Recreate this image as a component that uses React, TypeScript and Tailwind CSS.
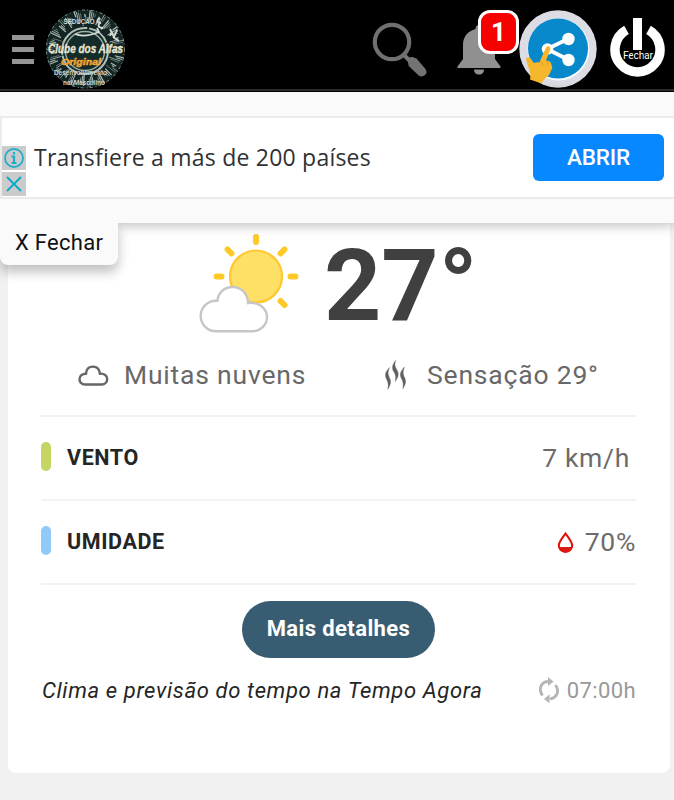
import type { ReactNode } from "react";

const ROBOTO = "font-['Roboto','Liberation_Sans',sans-serif]";

const RAYS = Array.from({ length: 90 }, (_, i) => ({
  angle: i * 4 + ((i * 7) % 4),
  from: 25 + ((i * 11) % 9),
  to: 34 + ((i * 5) % 6),
  width: 0.5 + ((i * 3) % 4) * 0.25,
}));

function ClubLogo() {
  return (
    <svg className="h-[80px] w-[80px] shrink-0 overflow-visible" viewBox="0 0 80 80">
      <circle cx="39.500" cy="40" r="39.500" fill="#122423" />
      {RAYS.map((r, i) => (
        <line
          key={i}
          x1="39.500"
          x2="39.500"
          y1={40 - r.from}
          y2={40 - r.to}
          stroke="#a9b8b2"
          strokeWidth={r.width}
          transform={`rotate(${r.angle} 39.500 40)`}
        />
      ))}
      <circle cx="39.500" cy="40" r="39" fill="none" stroke="#9fb0aa" strokeWidth="0.8" strokeDasharray="3 2 1 3" />
      <circle cx="39" cy="42" r="24" fill="#132b29" />
      <circle cx="39" cy="42" r="23" fill="none" stroke="#b3bfb6" strokeWidth="2" strokeDasharray="42 2 23 1" />
      <circle cx="39" cy="42" r="19.500" fill="none" stroke="#9eafa6" strokeWidth="1.400" />
      <path d="M29 25c7 3 14 2 24-2l-2-4M54 9c-4 2-3 5 1 5-4 1-3 5 2 5M64 20l4 8 3-7M67 28l6 4M66 22l-2 5" fill="none" stroke="#d7ddd4" strokeWidth="1.800" />
      <g fontFamily="Liberation Sans, sans-serif" fontWeight="bold" textAnchor="middle">
        <text x="33" y="15" fontSize="7" fill="#d5dbd7" textLength="31" lengthAdjust="spacingAndGlyphs">SEDUÇÃO</text>
        <text x="39.500" y="44" fontSize="12" fontStyle="italic" fill="#e7e5cf" stroke="#e7e5cf" strokeWidth="0.300" textLength="75" lengthAdjust="spacingAndGlyphs">Clube dos Alfas</text>
        <text x="35" y="55.500" fontSize="9.500" fontStyle="italic" fill="#f3a633" stroke="#f3a633" strokeWidth="0.500" textLength="40" lengthAdjust="spacingAndGlyphs">Original</text>
        <text x="34.500" y="66" fontSize="6.500" fill="#ccd4d0" textLength="53" lengthAdjust="spacingAndGlyphs">Desenvolvimento</text>
        <text x="38" y="75.500" fontSize="6.500" fill="#ccd4d0" textLength="42" lengthAdjust="spacingAndGlyphs">nal Masculino</text>
      </g>
    </svg>
  );
}

function SearchIcon() {
  return (
    <svg className="h-[60px] w-[58px]" viewBox="0 0 58 60">
      <path d="M32 35l9 9" stroke="#777" strokeWidth="4" />
      <circle cx="20" cy="22" r="17.200" fill="none" stroke="#707070" strokeWidth="4.200" />
      <path d="M35.500 39.500q1-3 5-2.500l4 1.500 9 10.500q2.500 4-.8 6.300-3 2.200-6 .2l-10-9.500z" fill="#737373" />
    </svg>
  );
}

function BellIcon() {
  return (
    <svg className="h-[52px] w-[44px]" viewBox="0 0 44 52">
      <path d="M22 1c2.200 0 3.500 1.800 3.500 4 7.500 2 12.500 7.500 12.500 16v14l5.500 7.500V44H.5v-1.500L6 35V21c0-8.500 5-14 12.500-16 0-2.200 1.300-4 3.500-4z" fill="#909090" />
      <path d="M17 45.500h10c0 3-2 5-5 5s-5-2-5-5z" fill="#909090" />
    </svg>
  );
}

function ShareIcon() {
  return (
    <svg className="h-[80px] w-[78px]" viewBox="0 0 78 80">
      <circle cx="39" cy="39" r="38.700" fill="#dcdce5" />
      <circle cx="39.500" cy="39.500" r="31" fill="#f6f8fb" />
      <circle cx="39" cy="38.500" r="30" fill="#0788ca" />
      <path d="M49 29L28 39l22 11" fill="none" stroke="#fff" strokeWidth="3.800" />
      <circle cx="49.500" cy="29" r="6.200" fill="#fff" />
      <circle cx="28.500" cy="39" r="5.800" fill="#fff" />
      <circle cx="49.500" cy="50" r="6.200" fill="#fff" />
      {/* Pointing hand */}
      <path d="M27 37.500c1-2.500 5.200-1.300 4.300 1.700L27 50.500c3.300.2 5.500 1.800 5.400 4.500 1.600 2 .8 4.300-.6 5.800C31 66.500 25 67.500 22.500 73.500L11 69.500c1-4.500 0-7.500-1-10.500L7.200 50.500c-.9-3.800 3.600-4.600 5-1.200l2.600 3.700c2-.9 4-.9 5.500-.5z" fill="#f6b72c" />
      <path d="M21 51.500c2.400.4 3.300 2.300 2.200 4.300M27 50.800c1.800 1.200 2 3.200.7 5" fill="none" stroke="#dc9722" strokeWidth="0.900" />
    </svg>
  );
}

function PowerIcon() {
  return (
    <svg className="h-[60px] w-[56px]" viewBox="0 0 56 60">
      <path d="M16.500 11.800A22.500 22.500 0 1 0 38.500 11.800" fill="none" stroke="#fff" strokeWidth="9.500" />
      <rect x="23" y="0" width="9" height="32" fill="#fff" />
      <text x="28" y="40.500" fontFamily="Roboto, sans-serif" fontSize="10.500" fill="#fff" stroke="#000" strokeWidth="2" paintOrder="stroke" textAnchor="middle" textLength="30">Fechar</text>
    </svg>
  );
}

function SunIcon() {
  return (
    <svg className="h-[102px] w-[102px]" viewBox="0 0 102 102">
      <g stroke="#ffc928" strokeWidth="6" strokeLinecap="round">
        <path d="M57 5v5M28.500 17.500l4 4M85.500 17.500l-4 4M17.500 44.500h5M91.500 44.500h5M81.500 69l4 4" />
      </g>
      <circle cx="57" cy="44.500" r="26" fill="#ffe066" stroke="#ffc72d" strokeWidth="2.200" />
      <path d="M17 99.300a15.300 15.300 0 0 1 0-30.600h1.500c.5-8 7-13.700 15-13.700 8.500 0 15.500 6.500 15.500 16 10-1.500 19 5 19 14 0 8-6.500 14.300-15 14.300z" fill="#fff" stroke="#c6c6c6" strokeWidth="2.400" />
    </svg>
  );
}

function CloudIcon() {
  return (
    <svg className="h-[23px] w-[32px]" viewBox="0 0 32 23" fill="none" stroke="#666" strokeWidth="2.400">
      <path d="M8 20.500c-3.500 0-5.500-2.600-5.500-5.300 0-3.200 2.600-5.400 6.500-5.500C9.300 5.300 12 2.600 16 2.600s6.500 3 6.900 7.100c4.500-.4 7.300 2 7.300 5.400 0 3.200-2.400 5.400-5.500 5.400z" />
    </svg>
  );
}

function HeatIcon() {
  return (
    <svg className="h-[30px] w-[24px]" viewBox="0 0 24 30" fill="#606060" stroke="#606060" strokeWidth="0.400">
      <path d="M4.500 7.500C-.5 13-.5 15.500 2.200 20.500c1.200 2.500 1.300 5 .6 8.800 3.600-5.500 3.300-8.300 1.300-12.300C2.500 13.500 3 11.500 4.500 7.500z" />
      <path d="M10.500.5C6.500 6 7 9 9.300 12.500c1.600 2.600 1.800 5.200.9 9 4-5.500 3.600-8.500 1.300-12.200C9.500 6 9.500 4.200 10.500.5z" />
      <path d="M19.500 7C14.500 12.500 14.500 15 17.200 20c1.200 2.500 1.300 5 .6 8.800 3.600-5.500 3.300-8.300 1.300-12.300C17.500 13 18 11 19.500 7z" />
    </svg>
  );
}

function DropIcon() {
  return (
    <svg className="h-[23px] w-[17px]" viewBox="0 0 17 23">
      <path d="M8.500 2.500c2.800 4 6.700 8.300 6.700 12.100a6.700 6.400 0 0 1-13.400 0c0-3.800 3.900-8.100 6.700-12.100z" fill="#fff" stroke="#e40b08" strokeWidth="2" />
      <path d="M1.800 16h13.400c-.7 3.200-3.200 5-6.700 5s-6-1.800-6.700-5z" fill="#d91b12" />
    </svg>
  );
}

function RefreshIcon() {
  return (
    <svg className="h-[28px] w-[20px]" viewBox="0 0 20 28" fill="none" stroke="#b5b5b5" strokeWidth="2.900">
      <path d="M3.500 19.500C-1 13 2 6 9 5.500M16.500 9C21 15.500 17.500 22 11 22.800" />
      <path d="M9 1l5.500 4.500L9 10zM10.500 18.200L5 23l5.500 4.300z" fill="#b5b5b5" stroke="none" />
    </svg>
  );
}

function Header() {
  return (
    <header className="flex h-[92px] items-start border-b border-black bg-black">
      <div className="flex h-[91px] w-full items-start border-b-2 border-[#302e2f] pl-3 pr-2">
        <div className="mt-[35px] flex w-[22px] flex-col gap-[7px]">
          <span className="h-[5px] bg-[#949494]" />
          <span className="h-[5px] bg-[#949494]" />
          <span className="h-[5px] bg-[#949494]" />
        </div>
        <div className="ml-3 mt-[9px]">
          <ClubLogo />
        </div>
        <div className="ml-auto mt-[20px]">
          <SearchIcon />
        </div>
        <div className="relative ml-[27px] mt-[24px] w-[62px]">
          <BellIcon />
          <span className={`absolute -top-[14px] left-[21px] flex h-[44px] w-[41px] items-center justify-center rounded-[12px] border-[3px] border-white bg-[#f60000] text-[26px] font-bold text-white ${ROBOTO}`}>
            1
          </span>
        </div>
        <div className="mt-[10px]">
          <ShareIcon />
        </div>
        <div className="ml-[13px] mt-[18px]">
          <PowerIcon />
        </div>
      </div>
    </header>
  );
}

function AdBanner() {
  return (
    <div className="relative z-10 h-[131px] bg-[#fafafa] pt-6 shadow-[0_2px_12px_rgba(0,0,0,0.28)]">
      <div className="flex h-[83px] border-2 border-r-0 border-[#ebebeb] bg-white pr-[10px]">
        <div className="mt-[28px] flex w-[24px] flex-col gap-[2px]">
          <span className="flex h-6 w-6 items-center justify-center bg-[#cbcbcb]">
            <svg className="h-[22px] w-[22px]" viewBox="0 0 22 22" fill="none" stroke="#20aeca">
              <circle cx="11" cy="11" r="9" strokeWidth="1.800" />
              <path d="M8.500 9.500H11V16M8.500 16h5M11 5v2.500" strokeWidth="2.200" />
            </svg>
          </span>
          <span className="flex h-6 w-6 items-center justify-center bg-[#cbcbcb]">
            <svg className="h-4 w-4" viewBox="0 0 16 16" stroke="#08a9c8" strokeWidth="1.800">
              <path d="M1 1l14 14M15 1L1 15" />
            </svg>
          </span>
        </div>
        <p className="ml-2 mt-[22px] whitespace-nowrap font-['Open_Sans','Noto_Sans',sans-serif] text-[23px] leading-[34px] tracking-[0.220px] text-[#303134]">
          Transfiere a más de 200 países
        </p>
        <button className="ml-auto mt-4 flex h-[47px] w-[131px] items-center justify-center rounded-md bg-[#0788ff] font-['Roboto',sans-serif] text-[22.500px] font-medium tracking-[-0.200px] text-white">
          ABRIR
        </button>
      </div>
      <button className={`absolute left-0 top-full h-[42px] w-[118px] rounded-b-lg bg-[#fafafa] pb-[3px] pl-[15px] text-left text-[22px] leading-[38px] tracking-[0.300px] text-[#111] shadow-[0_7px_12px_rgba(0,0,0,0.25)] [clip-path:inset(0_-24px_-24px_-24px)] ${ROBOTO}`}>
        X Fechar
      </button>
    </div>
  );
}

interface MetricRowProps {
  label: string;
  bar: string;
  children: ReactNode;
}

function MetricRow({ label, bar, children }: MetricRowProps) {
  return (
    <div className="flex h-[84px] items-center border-b-2 border-[#f3f3f3] pb-[2px]">
      <span className={`mb-[2px] h-[29px] w-[10px] rounded-full ${bar}`} />
      <span className="ml-4 pt-[2px] text-[21.500px] font-bold tracking-[0.600px] text-[#252525]">{label}</span>
      <div className="ml-auto flex items-center pt-[2px] text-[26.500px] tracking-[0.700px] text-[#6b6b6b]">{children}</div>
    </div>
  );
}

function WeatherCard() {
  return (
    <main className="ml-2 mr-1 h-[550px] rounded-b-lg bg-white pl-[33px] pr-[34px]">
      {/* Current temperature */}
      <div className="flex h-[125px] items-start pl-[158px] pt-[9px]">
        <SunIcon />
        <span className="ml-[23px] text-[100px] font-bold leading-[107px] text-[#404040]">27°</span>
      </div>

      {/* Condition */}
      <div className="flex h-[69px] items-start border-b-2 border-[#f1f1f1] pl-[36px] pt-[7px] text-[26.500px] leading-[40px] tracking-[0.800px] text-[#686868]">
        <span className="mt-[9px]">
          <CloudIcon />
        </span>
        <span className="ml-[15px] w-[261px]">Muitas nuvens</span>
        <span className="mt-[5px]">
          <HeatIcon />
        </span>
        <span className="ml-[18px] whitespace-nowrap">Sensação 29°</span>
      </div>

      <MetricRow label="VENTO" bar="bg-[#c5d463]">
        <span className="mr-[6px]">7 km/h</span>
      </MetricRow>
      <MetricRow label="UMIDADE" bar="bg-[#91caf9]">
        <DropIcon />
        <span className="ml-[11px]">70%</span>
      </MetricRow>

      <div className="flex justify-center pt-4">
        <button className="h-[57px] w-[193px] rounded-full bg-[#385d72] pb-[2px] text-[22px] font-bold tracking-[0.400px] text-white">
          Mais detalhes
        </button>
      </div>

      <div className="mt-[17px] flex h-[30px] items-center justify-between whitespace-nowrap">
        <span className="pl-px text-[22px] italic tracking-[0.640px] text-[#252525]">Clima e previsão do tempo na Tempo Agora</span>
        <span className="flex items-center gap-2 text-[22px] tracking-[0.400px] text-[#999]">
          <RefreshIcon />
          07:00h
        </span>
      </div>
    </main>
  );
}

export default function App() {
  return (
    <div className={`h-[800px] w-[674px] overflow-hidden bg-[#f1f1f1] ${ROBOTO}`}>
      <Header />
      <AdBanner />
      <WeatherCard />
    </div>
  );
}
